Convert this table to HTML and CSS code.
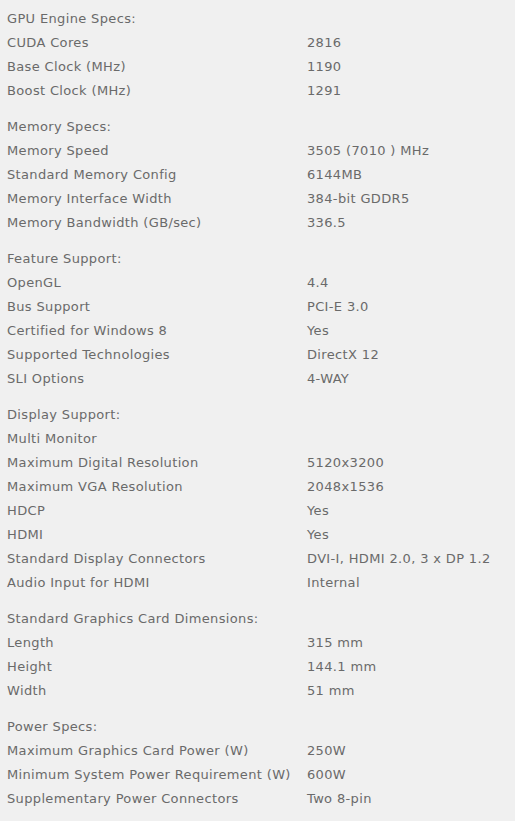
FILE: index.html
```html
<!DOCTYPE html>
<html>
<head>
<meta charset="utf-8">
<link rel="stylesheet" href="styles.css">
</head>
<body>
<div class="specs">
  <section class="group">
    <div class="head">GPU Engine Specs:</div>
    <div class="row"><span class="k">CUDA Cores</span><span class="v">2816</span></div>
    <div class="row"><span class="k">Base Clock (MHz)</span><span class="v">1190</span></div>
    <div class="row"><span class="k">Boost Clock (MHz)</span><span class="v">1291</span></div>
  </section>
  <section class="group">
    <div class="head">Memory Specs:</div>
    <div class="row"><span class="k">Memory Speed</span><span class="v">3505 (7010 ) MHz</span></div>
    <div class="row"><span class="k">Standard Memory Config</span><span class="v">6144MB</span></div>
    <div class="row"><span class="k">Memory Interface Width</span><span class="v">384-bit GDDR5</span></div>
    <div class="row"><span class="k">Memory Bandwidth (GB/sec)</span><span class="v">336.5</span></div>
  </section>
  <section class="group">
    <div class="head">Feature Support:</div>
    <div class="row"><span class="k">OpenGL</span><span class="v">4.4</span></div>
    <div class="row"><span class="k">Bus Support</span><span class="v">PCI-E 3.0</span></div>
    <div class="row"><span class="k">Certified for Windows 8</span><span class="v">Yes</span></div>
    <div class="row"><span class="k">Supported Technologies</span><span class="v">DirectX 12</span></div>
    <div class="row"><span class="k">SLI Options</span><span class="v">4-WAY</span></div>
  </section>
  <section class="group">
    <div class="head">Display Support:</div>
    <div class="row"><span class="k">Multi Monitor</span><span class="v"></span></div>
    <div class="row"><span class="k">Maximum Digital Resolution</span><span class="v">5120x3200</span></div>
    <div class="row"><span class="k">Maximum VGA Resolution</span><span class="v">2048x1536</span></div>
    <div class="row"><span class="k">HDCP</span><span class="v">Yes</span></div>
    <div class="row"><span class="k">HDMI</span><span class="v">Yes</span></div>
    <div class="row"><span class="k">Standard Display Connectors</span><span class="v">DVI-I, HDMI 2.0, 3 x DP 1.2</span></div>
    <div class="row"><span class="k">Audio Input for HDMI</span><span class="v">Internal</span></div>
  </section>
  <section class="group">
    <div class="head">Standard Graphics Card Dimensions:</div>
    <div class="row"><span class="k">Length</span><span class="v">315 mm</span></div>
    <div class="row"><span class="k">Height</span><span class="v">144.1 mm</span></div>
    <div class="row"><span class="k">Width</span><span class="v">51 mm</span></div>
  </section>
  <section class="group">
    <div class="head">Power Specs:</div>
    <div class="row"><span class="k">Maximum Graphics Card Power (W)</span><span class="v">250W</span></div>
    <div class="row"><span class="k">Minimum System Power Requirement (W)</span><span class="v">600W</span></div>
    <div class="row"><span class="k">Supplementary Power Connectors</span><span class="v">Two 8-pin</span></div>
  </section>
</div>
</body>
</html>
```
FILE: styles.css
```css
html, body {
  margin: 0;
  padding: 0;
  background: #f0f0f0;
}
body {
  font-family: "DejaVu Sans", Verdana, sans-serif;
  font-size: 13px;
  letter-spacing: 0.35px;
  color: #6a6a6a;
}
.specs {
  padding: 7px 7px 5px;
  display: flex;
  flex-direction: column;
  gap: 12px;
}
.group {
  display: flex;
  flex-direction: column;
}
.head, .row {
  height: 24px;
  line-height: 24px;
  white-space: nowrap;
}
.row {
  display: grid;
  grid-template-columns: 300px auto;
}
```
